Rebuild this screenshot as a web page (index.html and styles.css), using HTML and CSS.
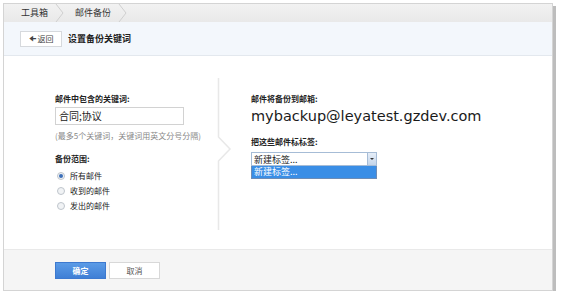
FILE: index.html
```html
<!DOCTYPE html>
<html lang="zh-CN">
<head>
    <meta charset="UTF-8">
    <title>邮件备份</title>
    <link rel="stylesheet" href="styles.css">
</head>
<body>
    <div class="frame">
        <div class="crumbs">
            <span class="crumb">工具箱</span>
            <svg class="sep" width="10" height="18" viewBox="0 0 10 18"><polyline points="1,0 8,9 1,18" fill="none" stroke="#cfcfcf" stroke-width="1"/></svg>
            <span class="crumb">邮件备份</span>
            <svg class="sep" width="10" height="18" viewBox="0 0 10 18"><polyline points="1,0 8,9 1,18" fill="none" stroke="#cfcfcf" stroke-width="1"/></svg>
        </div>
        <div class="head">
            <button class="back"><span class="arrow">&#129032;</span> 返回</button>
            <h2>设置备份关键词</h2>
        </div>
        <div class="main">
            <div class="col-left">
                <div class="label">邮件中包含的关键词:</div>
                <div class="keyword">合同;协议</div>
                <p class="hint">(最多5个关键词，关键词用英文分号分隔)</p>
                <div class="label">备份范围:</div>
                <ul class="radios">
                    <li><span class="radio checked"></span>所有邮件</li>
                    <li><span class="radio"></span>收到的邮件</li>
                    <li><span class="radio"></span>发出的邮件</li>
                </ul>
            </div>
            <svg class="divider" width="16" height="152" viewBox="0 0 16 152"><polyline points="1.5,0 1.5,59 13,71 1.5,83 1.5,152" fill="none" stroke="#e8e8e8" stroke-width="1.5"/></svg>
            <div class="col-right">
                <div class="label">邮件将备份到邮箱:</div>
                <div class="email">mybackup@leyatest.gzdev.com</div>
                <div class="label">把这些邮件标标签:</div>
                <div class="select">
                    <div class="select-box">
                        <span>新建标签...</span>
                        <span class="select-btn"></span>
                    </div>
                    <div class="select-list">新建标签...</div>
                </div>
            </div>
        </div>
        <div class="foot">
            <button class="ok">确定</button>
            <button class="cancel">取消</button>
        </div>
    </div>
</body>
</html>
```

FILE: styles.css
```css
body {
    margin: 0;
    background: #fff;
    font-family: "Noto Sans CJK SC", "DejaVu Sans", sans-serif;
    font-size: 9px;
    color: #222;
}
.frame {
    margin: 3px 0 0 3px;
    width: 550px;
    height: 288px;
    border: 1px solid #d4d4d4;
    box-shadow: 3px 3px 0 #bdbdbd;
    display: flex;
    flex-direction: column;
    box-sizing: border-box;
}
.crumbs {
    height: 18px;
    background: linear-gradient(#f2f2f2, #e9e9e9);
    display: flex;
    align-items: center;
    padding-left: 17px;
    color: #333;
}
.crumb {
    line-height: 18px;
    margin-right: 7px;
}
.sep {
    display: block;
    margin-right: 10px;
}
.head {
    height: 33px;
    background: #f3f7fc;
    border-bottom: 1px solid #e3e8ee;
    display: flex;
    align-items: center;
    padding-left: 16px;
}
.head h2 {
    margin: 0 0 0 6px;
    font-size: 9px;
    font-weight: bold;
}
.back {
    width: 42px;
    height: 16px;
    padding: 0;
    border: 1px solid #d6d9dd;
    background: #fff;
    font-family: inherit;
    font-size: 8px;
    color: #444;
    display: flex;
    align-items: center;
    justify-content: center;
    gap: 2px;
}
.back .arrow {
    font-size: 8px;
    font-family: "DejaVu Sans", sans-serif;
}
.main {
    flex: 1;
    display: flex;
    align-items: flex-start;
}
.col-left {
    width: 162px;
    padding: 37px 0 0 51px;
}
.label {
    font-weight: bold;
    font-size: 8px;
    line-height: 12px;
}
.keyword {
    margin-top: 2px;
    width: 129px;
    height: 18px;
    border: 1px solid #d2d2d2;
    font-size: 10px;
    line-height: 16px;
    padding-left: 3px;
    box-sizing: border-box;
}
.hint {
    margin: 5px 0 12px;
    font-size: 8px;
    color: #888;
}
.radios {
    list-style: none;
    margin: 3px 0 0 2px;
    padding: 0;
}
.radios li {
    display: flex;
    align-items: center;
    gap: 5px;
    height: 15px;
    font-size: 8px;
}
.radio {
    width: 6px;
    height: 6px;
    border-radius: 50%;
    border: 1px solid #bfc5cc;
    background: #f1f3f5;
    position: relative;
}
.radio.checked::after {
    content: "";
    position: absolute;
    left: 1px;
    top: 1px;
    width: 4px;
    height: 4px;
    border-radius: 50%;
    background: #3c6fb8;
}
.divider {
    margin-top: 22px;
    display: block;
}
.col-right {
    padding: 37px 0 0 18px;
}
.email {
    font-family: "DejaVu Sans", sans-serif;
    font-size: 14.5px;
    line-height: 20px;
    margin: 1px 0 10px;
    color: #1a1a1a;
}
.select {
    margin-top: 4px;
    width: 126px;
}
.select-box {
    height: 14px;
    border: 1px solid #a6bcd6;
    display: flex;
    align-items: center;
    justify-content: space-between;
    padding-left: 2px;
    font-size: 9px;
    box-sizing: border-box;
}
.select-btn {
    width: 8px;
    height: 12px;
    background: linear-gradient(#e6eef8, #c4d5ea);
    border-left: 1px solid #a6bcd6;
    position: relative;
}
.select-btn::after {
    content: "";
    position: absolute;
    left: 2px;
    top: 5px;
    border: 2px solid transparent;
    border-top: 2px solid #333;
}
.select-list {
    height: 13px;
    border: 1px solid #6d8cb5;
    border-top: none;
    background: #3a8ee6;
    color: #fff;
    font-size: 9px;
    line-height: 12px;
    padding-left: 2px;
    box-sizing: border-box;
}
.foot {
    height: 40px;
    background: #f5f5f5;
    border-top: 1px solid #e9e9e9;
    display: flex;
    align-items: center;
    padding-left: 51px;
    gap: 3px;
}
.foot button {
    width: 51px;
    height: 17px;
    padding: 0;
    font-family: inherit;
    font-size: 8px;
}
.ok {
    border: 1px solid #3d79cf;
    background: linear-gradient(#5b9be6, #3f7fd6);
    color: #fff;
    font-weight: bold;
}
.cancel {
    border: 1px solid #d8d8d8;
    background: #fff;
    color: #555;
}
```
